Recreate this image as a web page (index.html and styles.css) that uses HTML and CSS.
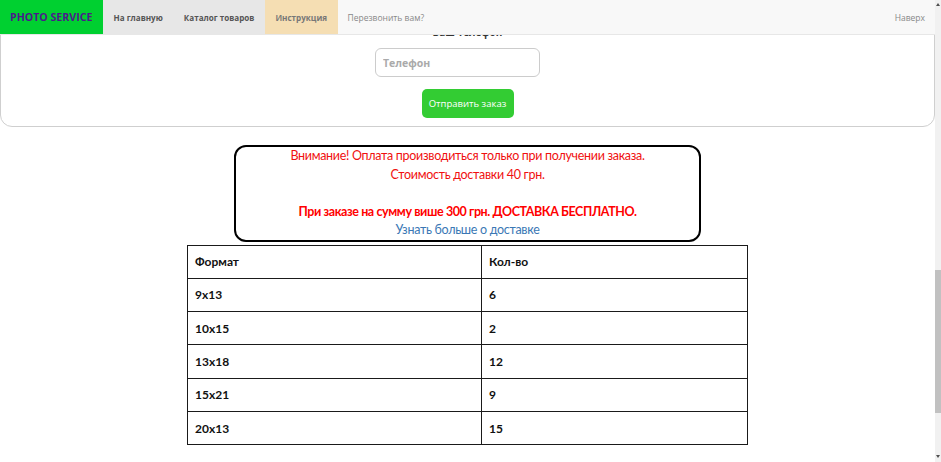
FILE: index.html
```html
<!DOCTYPE html>
<html lang="ru">
<head>
<meta charset="utf-8">
<title>Photo Service</title>
<link rel="stylesheet" href="styles.css">
</head>
<body>
<div class="viewport">
  <div class="page">
    <nav class="navbar">
      <a class="brand" href="#">PHOTO SERVICE</a>
      <a class="nav-item grey" href="#">На главную</a>
      <a class="nav-item grey" href="#">Каталог товаров</a>
      <a class="nav-item wheat" href="#">Инструкция</a>
      <a class="nav-item plain" href="#">Перезвонить вам?</a>
      <a class="nav-item plain right" href="#">Наверх</a>
    </nav>
    <div class="content">
      <form class="card">
        <label class="label">Ваш телефон</label>
        <input class="phone" type="text" placeholder="Телефон">
        <button class="send" type="button">Отправить заказ</button>
      </form>
      <div class="notice">
        <p>Внимание! Оплата производиться только при получении заказа.</p>
        <p>Стоимость доставки 40 грн.</p>
        <p>&nbsp;</p>
        <p class="strong">При заказе на сумму више 300 грн. ДОСТАВКА БЕСПЛАТНО.</p>
        <p><a class="link" href="#">Узнать больше о доставке</a></p>
      </div>
      <table class="order">
        <tr><td>Формат</td><td>Кол-во</td></tr>
        <tr><td>9x13</td><td>6</td></tr>
        <tr><td>10x15</td><td>2</td></tr>
        <tr><td>13x18</td><td>12</td></tr>
        <tr><td>15x21</td><td>9</td></tr>
        <tr><td>20x13</td><td>15</td></tr>
      </table>
    </div>
  </div>
  <div class="scrollbar">
    <span class="arrow up"></span>
    <span class="thumb"></span>
    <span class="arrow down"></span>
  </div>
</div>
</body>
</html>
```
FILE: styles.css
```css
* { box-sizing: border-box; }
html, body { margin: 0; padding: 0; background: #fff; }
body { font-family: "Open Sans", "Liberation Sans", sans-serif; }

.viewport {
  display: flex;
  height: 462px;
  overflow: hidden;
}
.page {
  flex: 1;
  min-width: 0;
  overflow: hidden;
}

.navbar {
  position: relative;
  z-index: 2;
  display: flex;
  align-items: stretch;
  height: 35px;
  background: #f8f8f8;
  border-bottom: 1px solid #e7e7e7;
}
.brand {
  display: flex;
  align-items: center;
  padding: 0 10px;
  width: 103px;
  background: #00d030;
  color: #4a1a8a;
  font-weight: 700;
  font-size: 10.6px;
  text-decoration: none;
  white-space: nowrap;
}
.nav-item {
  display: flex;
  align-items: center;
  padding: 0 10.5px;
  font-size: 8.1px;
  text-decoration: none;
  white-space: nowrap;
}
.nav-item.grey { background: #e7e7e7; color: #555; font-weight: 700; }
.nav-item.wheat { background: #f5deb3; color: #777; font-weight: 700; }
.nav-item.plain { color: #888; font-weight: 400; font-size: 8.5px; padding-left: 10px; }
.nav-item.right { margin-left: auto; padding-right: 10px; }

.content {
  display: flex;
  flex-direction: column;
  align-items: center;
}

.card {
  position: relative;
  z-index: 1;
  width: 100%;
  margin: -32px 0 0;
  padding: 20px 0 8px;
  border: 1px solid #cfcfcf;
  border-radius: 12px;
  display: flex;
  flex-direction: column;
  align-items: center;
  background: #fff;
}
.label {
  font-size: 10px;
  font-weight: 700;
  color: #333;
  line-height: 16px;
}
.phone {
  margin-top: 8px;
  margin-right: 20px;
  width: 165px;
  height: 29px;
  border: 1px solid #ccc;
  border-radius: 6px;
  padding: 0 7px;
  font-family: "Open Sans", sans-serif;
  font-size: 10.5px;
  font-weight: 700;
  color: #555;
}
.phone::placeholder { color: #aaa; }
.send {
  margin-top: 12px;
  height: 29px;
  width: 92px;
  border: 0;
  border-radius: 5px;
  background: #33cc33;
  color: #fff;
  font-family: "Open Sans", sans-serif;
  font-size: 9.5px;
  padding: 0;
}

.notice {
  margin-top: 18px;
  width: 467px;
  border: 2px solid #000;
  border-radius: 12px;
  text-align: center;
  font-family: "Lato", "Liberation Sans", sans-serif;
  font-size: 12.5px;
  letter-spacing: -0.3px;
  color: #f01010;
}
.notice p { margin: 0; line-height: 18.5px; }
.notice .strong { font-weight: 700; color: #ff0000; letter-spacing: -0.4px; }
.link { color: #3b78b5; text-decoration: none; }

.order {
  margin-top: 3px;
  width: 561px;
  border-collapse: collapse;
  font-family: "Lato", "Liberation Sans", sans-serif;
  font-weight: 700;
  font-size: 12px;
  color: #111;
}
.order td {
  border: 1px solid #1a1a1a;
  height: 33.3px;
  padding: 0 7px;
  vertical-align: middle;
}
.order td:first-child { width: 294px; }

.scrollbar {
  width: 6px;
  background: #f1f1f1;
  display: flex;
  flex-direction: column;
  align-items: center;
}
.arrow {
  width: 0;
  height: 0;
  border-left: 2px solid transparent;
  border-right: 2px solid transparent;
}
.arrow.up { margin-top: 3px; border-bottom: 3px solid #505050; }
.arrow.down { margin-top: auto; margin-bottom: 4px; border-top: 3px solid #505050; }
.thumb {
  margin-top: 264px;
  width: 6px;
  height: 143px;
  background: #c1c1c1;
}
```
